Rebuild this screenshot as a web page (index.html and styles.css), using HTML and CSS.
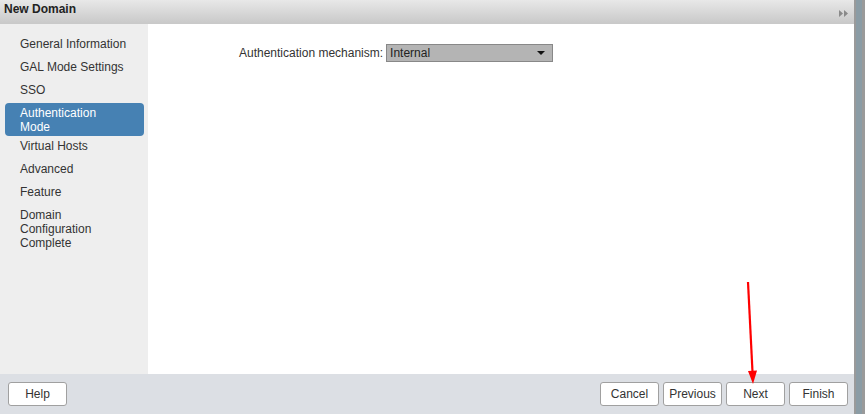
FILE: index.html
```html
<!DOCTYPE html>
<html>
<head>
<meta charset="utf-8">
<link rel="stylesheet" href="styles.css">
</head>
<body>
<div class="screen">
  <div class="dialog">
    <div class="titlebar">
      <span class="title">New Domain</span>
      <svg class="expand" width="9" height="7" viewBox="0 0 9 7"><path d="M0 0 L4 3.5 L0 7Z M5 0 L9 3.5 L5 7Z" fill="#8a8a8a"/></svg>
    </div>
    <div class="main">
      <ul class="nav">
        <li>General Information</li>
        <li>GAL Mode Settings</li>
        <li>SSO</li>
        <li class="active">Authentication Mode</li>
        <li>Virtual Hosts</li>
        <li>Advanced</li>
        <li>Feature</li>
        <li>Domain Configuration Complete</li>
      </ul>
      <div class="content">
        <div class="field">
          <label class="label">Authentication mechanism:</label>
          <div class="select"><span>Internal</span><svg width="8" height="4" viewBox="0 0 8 4"><path d="M0 0 H8 L4 4Z" fill="#111"/></svg></div>
        </div>
        <svg class="arrow" width="20" height="110" viewBox="0 0 20 110"><path d="M5 2 L9.5 92" stroke="#ff0000" stroke-width="2.2" fill="none"/><path d="M5 91 L14 90.5 L10 104Z" fill="#ff0000"/></svg>
      </div>
    </div>
    <div class="footer">
      <button class="btn help">Help</button>
      <div class="actions">
        <button class="btn">Cancel</button>
        <button class="btn">Previous</button>
        <button class="btn">Next</button>
        <button class="btn">Finish</button>
      </div>
    </div>
  </div>
  <div class="edge"></div>
</div>
</body>
</html>
```
FILE: styles.css
```css
html, body { margin: 0; padding: 0; }
body { font-family: "Liberation Sans", Arial, sans-serif; font-size: 12px; color: #333; width: 865px; height: 414px; overflow: hidden; }
.screen { display: flex; width: 865px; height: 414px; }
.dialog { width: 854px; display: flex; flex-direction: column; height: 414px; }
.edge { width: 11px; background: linear-gradient(to right, #9a9a9a 0 2px, #8b9ca5 2px 8px, #9a9a9a 8px 11px); }
.titlebar { height: 24px; flex: none; background: linear-gradient(#e8e8e8, #c8c8c8); display: flex; align-items: center; justify-content: space-between; padding: 0 6px 0 4px; box-sizing: border-box; }
.title { font-weight: bold; font-size: 12px; color: #222; position: relative; top: -3px; }
.expand { position: relative; top: 1px; }
.main { flex: 1; display: flex; min-height: 0; }
.nav { list-style: none; margin: 0; padding: 8px 4px 0 5px; width: 148px; box-sizing: border-box; background: #eeeeee; flex: none; }
.nav li { padding: 5px 15px 4px; line-height: 14px; color: #333; font-size: 12px; }
.nav li.active { background: #4681b3; color: #fff; border-radius: 4px; padding: 3px 30px 2px 15px; margin: 2px 0 -2px; }
.content { flex: 1; background: #fff; position: relative; }
.field { display: flex; align-items: center; padding: 20px 0 0 91px; }
.label { font-size: 12px; color: #333; margin-right: 3px; }
.select { width: 158px; height: 16px; background: #b4b4b4; border: 1px solid #888; display: flex; align-items: center; justify-content: space-between; padding: 0 4px 0 3px; box-sizing: content-box; font-size: 12px; color: #222; }
.select svg { margin-right: 3px; }
.arrow { position: absolute; left: 595px; top: 256px; }
.footer { height: 40px; flex: none; background: #dcdfe4; display: flex; align-items: center; justify-content: space-between; padding: 0 6px 0 8px; box-sizing: border-box; }
.actions { display: flex; gap: 4px; }
.btn { font-family: "Liberation Sans", Arial, sans-serif; font-size: 12px; color: #333; background: #fff; border: 1px solid #a0a0a0; border-radius: 3px; width: 59px; height: 24px; padding: 0; margin: 0; }
.help { width: 59px; }
```
